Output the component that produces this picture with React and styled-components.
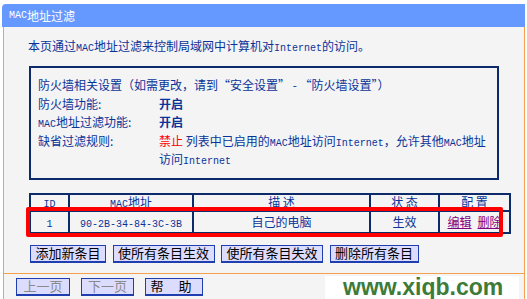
import React from 'react';
import styled, { createGlobalStyle } from 'styled-components';

const GlobalStyle = createGlobalStyle`
  body {
    margin: 0;
    background: #ffffff;
    font-family: "Noto Sans CJK SC", "Liberation Sans", sans-serif;
    font-size: 12px;
  }
`;

const Page = styled.div`
  position: relative;
  width: 523px;
  margin: 4px 0 0 2px;
`;

const TitleBar = styled.div`
  height: 23px;
  background: #6699ff;
  border-top-left-radius: 4px;
  color: #ffffff;
  display: flex;
  align-items: center;
  padding-left: 7px;
  font-size: 12px;
  line-height: 14px;
`;

const Lat = styled.span`
  font-family: "Liberation Mono", "DejaVu Sans Mono", monospace;
  font-size: 10px;
  line-height: 1;
`;

const Section = styled.div`
  margin-left: 1px;
  width: 522px;
  box-sizing: border-box;
  background: #f4f4f4;
  border-left: 1px solid #f5a04a;
  border-right: 1px solid #f5a04a;
  border-bottom: 1px solid #f5a04a;
  padding: ${(p) => p.pad};
  color: #0a3399;
`;

const Intro = styled.div`
  height: 14px;
  line-height: 14px;
  padding-left: 24px;
  white-space: nowrap;
`;

const InfoBox = styled.div`
  margin: 13px 0 0 25px;
  width: 470px;
  box-sizing: border-box;
  border: 2px solid #0d2a6b;
  padding: 8px 7px 9px;
  display: grid;
  grid-template-columns: 121px 1fr;
  line-height: 18.5px;
`;

const Full = styled.div`
  grid-column: 1 / 3;
  white-space: nowrap;
`;

const Value = styled.div`
  font-weight: ${(p) => (p.bold ? 700 : 400)};
`;

const Red = styled.span`
  color: #ff0000;
`;

const TableWrap = styled.div`
  position: relative;
  margin: 13px 0 0 25px;
  width: 470px;
`;

const Table = styled.table`
  width: 470px;
  border-collapse: collapse;
  table-layout: fixed;
`;

const Th = styled.th`
  border: 2px solid #0d2a6b;
  font-weight: 400;
  height: 14px;
  padding: 0;
  line-height: 14px;
  text-align: center;
  width: ${(p) => p.w}px;
`;

const Td = styled.td`
  border: 2px solid #0d2a6b;
  height: 20px;
  padding: 0;
  text-align: center;
  line-height: 20px;
`;

const Link = styled.a`
  color: #800080;
  text-decoration: underline;
  margin: 0 3px;
`;

const Highlight = styled.div`
  position: absolute;
  left: -3px;
  top: 14px;
  width: 477px;
  height: 30px;
  box-sizing: border-box;
  border: 4px solid #ff0000;
  border-radius: 2px;
  pointer-events: none;
`;

const ButtonRow = styled.div`
  display: flex;
  gap: ${(p) => p.gap}px;
  margin: ${(p) => p.m};
`;

const Button = styled.button`
  height: 18px;
  padding: 0 4.5px;
  min-width: ${(p) => p.mw || 0}px;
  background: #dcdcff;
  border: 1px solid #1f3fb0;
  border-width: 1px 1px 2px 1px;
  font-family: "Noto Sans CJK SC", sans-serif;
  font-size: 13px;
  line-height: 14px;
  color: ${(p) => (p.disabled ? '#8a8a8a' : '#000000')};
  letter-spacing: ${(p) => p.ls || 0}px;
`;

const Watermark = styled.div`
  position: absolute;
  left: 323px;
  top: 272px;
  width: 194px;
  height: 23px;
  background: #ffffff;
  color: #3c7b38;
  font-family: "Liberation Sans", Arial, sans-serif;
  font-weight: 700;
  font-size: 23px;
  line-height: 23px;
  padding-left: 18px;
  box-sizing: border-box;
  white-space: nowrap;
`;

export default function App() {
  return (
    <Page>
      <GlobalStyle />
      <TitleBar>
        <Lat>MAC</Lat>地址过滤
      </TitleBar>
      <Section pad="12px 0 10px">
        <Intro>
          本页通过<Lat>MAC</Lat>地址过滤来控制局域网中计算机对<Lat>Internet</Lat>的访问。
        </Intro>
        <InfoBox>
          <Full>防火墙相关设置（如需更改，请到“安全设置” - “防火墙设置”）</Full>
          <div>防火墙功能:</div>
          <Value bold>开启</Value>
          <div><Lat>MAC</Lat>地址过滤功能:</div>
          <Value bold>开启</Value>
          <div>缺省过滤规则:</div>
          <Value>
            <Red>禁止</Red> 列表中已启用的<Lat>MAC</Lat>地址访问<Lat>Internet</Lat>，允许其他<Lat>MAC</Lat>地址访问<Lat>Internet</Lat>
          </Value>
        </InfoBox>
        <TableWrap>
          <Table>
            <thead>
              <tr>
                <Th w={37}><Lat>ID</Lat></Th>
                <Th w={122}><Lat>MAC</Lat>地址</Th>
                <Th w={175}>描 述</Th>
                <Th w={67}>状 态</Th>
                <Th w={69}>配 置</Th>
              </tr>
            </thead>
            <tbody>
              <tr>
                <Td><Lat>1</Lat></Td>
                <Td><Lat>90-2B-34-84-3C-3B</Lat></Td>
                <Td>自己的电脑</Td>
                <Td>生效</Td>
                <Td>
                  <Link href="#">编辑</Link>
                  <Link href="#">删除</Link>
                </Td>
              </tr>
            </tbody>
          </Table>
          <Highlight />
        </TableWrap>
        <ButtonRow gap={6.5} m="11px 0 0 26px">
          <Button>添加新条目</Button>
          <Button>使所有条目生效</Button>
          <Button>使所有条目失效</Button>
          <Button>删除所有条目</Button>
        </ButtonRow>
      </Section>
      <Section pad="4px 0 4px">
        <ButtonRow gap={11} m="0 0 0 12px">
          <Button disabled mw={54}>上一页</Button>
          <Button disabled mw={53}>下一页</Button>
          <Button mw={48} ls={6}>帮 助</Button>
        </ButtonRow>
      </Section>
      <Watermark>www.xiqb.com</Watermark>
    </Page>
  );
}
